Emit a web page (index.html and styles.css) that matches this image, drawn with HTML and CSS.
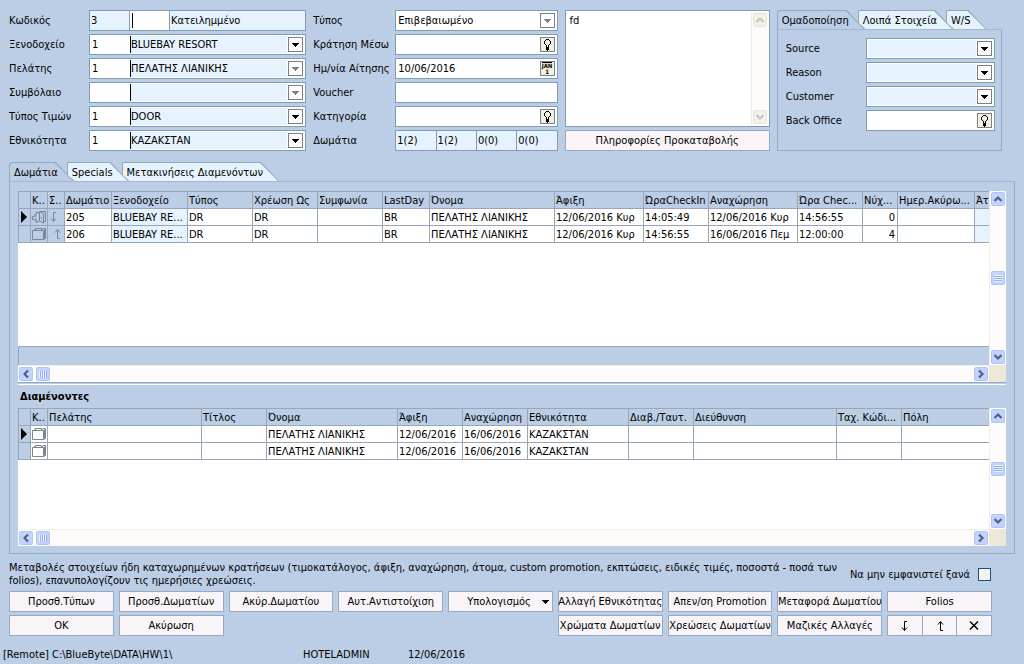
FILE: index.html
```html
<!DOCTYPE html>
<html lang="el">
<head>
    <meta charset="UTF-8">
    <meta name="viewport" content="width=device-width, initial-scale=1.0">
    <title>Κράτηση</title>
    <link rel="stylesheet" href="styles.css">
</head>
<body>
    <!-- Shared icons -->
    <svg class="sprite" aria-hidden="true">
        <symbol id="arrow" viewBox="0 0 13 13"><path d="M3 5h7v1h-1v1h-1v1h-1v1h-1v-1h-1v-1h-1v-1h-1z" fill="currentColor"/></symbol>
        <symbol id="bulb" viewBox="0 0 13 13"><path d="M5 1h3v1H5zM4 2h1v1H4zM8 2h1v1H8zM3 3h1v3H3zM9 3h1v3H9zM4 6h1v1H4zM8 6h1v1H8zM5 7h1v2H5zM7 7h1v2H7zM5 9h3v3H5zM6 12h1v1H6z" fill="#000"/></symbol>
        <symbol id="chev-up" viewBox="0 0 14 14"><path d="M3.500 9L7 5.500L10.500 9" fill="none" stroke="currentColor" stroke-width="2.200"/></symbol>
        <symbol id="chev-down" viewBox="0 0 14 14"><path d="M3.500 5L7 8.500L10.500 5" fill="none" stroke="currentColor" stroke-width="2.200"/></symbol>
        <symbol id="chev-left" viewBox="0 0 14 14"><path d="M9 3.500L5.500 7L9 10.500" fill="none" stroke="currentColor" stroke-width="2.200"/></symbol>
        <symbol id="chev-right" viewBox="0 0 14 14"><path d="M5 3.500L8.500 7L5 10.500" fill="none" stroke="currentColor" stroke-width="2.200"/></symbol>
        <symbol id="row-mark" viewBox="0 0 8 12"><path d="M1 0L7 6L1 12z" fill="#000"/></symbol>
        <symbol id="bag" viewBox="0 0 15 14"><path d="M.5 3.500h11v9H.5zM3.500 3.500v-2h6v2M11.500 12.500l2-1V1.500H11l-1.500 2M1.500 3.500l1-1h1M12.500 2.500v9" fill="none" stroke="currentColor"/></symbol>
        <symbol id="door" viewBox="0 0 15 14"><path d="M7.500 1.500h6v10h-2M7.500 1.500l4 2v9.500l-4-2zM7.500 3.500l-3-1.500v2l-2 .5v2H.5v3h2v1l2 .5v1.500l3-1.500M3 6.500l2-1M3 8.500l2 1M9.500 7v1.500" fill="none" stroke="currentColor"/></symbol>
        <symbol id="to-down" viewBox="0 0 10 12"><path d="M7 1.500H4.500V10M2 7.500L4.500 10.500L7 7.500" fill="none" stroke="currentColor"/></symbol>
        <symbol id="to-up" viewBox="0 0 10 12"><path d="M8 10.500H5.500V2M3 4.500L5.500 1.500L8 4.500" fill="none" stroke="currentColor"/></symbol>
        <symbol id="cross" viewBox="0 0 10 12"><path d="M1 1.500L9 9.500M9 1.500L1 9.500" fill="none" stroke="currentColor" stroke-width="1.500"/></symbol>
    </svg>

    <main>
        <section class="form">
            <div class="fields fields-main">
                <label for="code">Κωδικός</label>
                <div class="box split">
                    <input class="num pale" id="code" value="3">
                    <span class="caret-cell"><input class="caret" aria-label="Κατάσταση"></span>
                    <input class="pale" aria-label="Περιγραφή" value="Κατειλημμένο">
                </div>
                <label for="hotel">Ξενοδοχείο</label>
                <div class="box combo">
                    <input class="num" id="hotel" value="1">
                    <select class="caret" aria-label="Ξενοδοχείο"><option>BLUEBAY RESORT</option></select>
                    <svg class="drop"><use href="#arrow"/></svg>
                </div>
                <label for="customer">Πελάτης</label>
                <div class="box combo">
                    <input class="num" id="customer" value="1">
                    <select class="caret" aria-label="Πελάτης"><option>ΠΕΛΑΤΗΣ ΛΙΑΝΙΚΗΣ</option></select>
                    <svg class="drop off"><use href="#arrow"/></svg>
                </div>
                <label for="contract">Συμβόλαιο</label>
                <div class="box combo">
                    <input class="num" id="contract">
                    <select class="caret" aria-label="Συμβόλαιο"><option></option></select>
                    <svg class="drop off"><use href="#arrow"/></svg>
                </div>
                <label for="rate">Τύπος Τιμών</label>
                <div class="box combo">
                    <input class="num" id="rate" value="1">
                    <select class="caret" aria-label="Τύπος Τιμών"><option>DOOR</option></select>
                    <svg class="drop"><use href="#arrow"/></svg>
                </div>
                <label for="nation">Εθνικότητα</label>
                <div class="box combo">
                    <input class="num" id="nation" value="1">
                    <select class="caret" aria-label="Εθνικότητα"><option>ΚΑΖΑΚΣΤΑΝ</option></select>
                    <svg class="drop"><use href="#arrow"/></svg>
                </div>
            </div>

            <div class="fields fields-type">
                <label for="type">Τύπος</label>
                <div class="box">
                    <select id="type"><option>Επιβεβαιωμένο</option></select>
                    <svg class="drop off"><use href="#arrow"/></svg>
                </div>
                <label for="via">Κράτηση Μέσω</label>
                <div class="box">
                    <input id="via">
                    <button class="pick" aria-label="Αναζήτηση"><svg><use href="#bulb"/></svg></button>
                </div>
                <label for="asked">Ημ/νία Αίτησης</label>
                <div class="box">
                    <input id="asked" value="10/06/2016">
                    <button class="pick cal"><span>JAN</span><span>1</span></button>
                </div>
                <label for="voucher">Voucher</label>
                <div class="box"><input id="voucher"></div>
                <label for="category">Κατηγορία</label>
                <div class="box">
                    <input id="category">
                    <button class="pick" aria-label="Αναζήτηση"><svg><use href="#bulb"/></svg></button>
                </div>
                <label for="rooms">Δωμάτια</label>
                <div class="box split rooms">
                    <input class="pale" id="rooms" value="1(2)">
                    <input class="pale" aria-label="Δωμάτια 2" value="1(2)">
                    <input class="pale" aria-label="Δωμάτια 3" value="0(0)">
                    <input class="pale" aria-label="Δωμάτια 4" value="0(0)">
                </div>
            </div>

            <div class="notes">
                <div class="box memo">
                    <textarea aria-label="Σημειώσεις">fd</textarea>
                    <div class="vscroll off">
                        <button aria-label="Πάνω"><svg><use href="#chev-up"/></svg></button>
                        <button aria-label="Κάτω"><svg><use href="#chev-down"/></svg></button>
                    </div>
                </div>
                <button class="btn">Πληροφορίες Προκαταβολής</button>
            </div>

            <div class="group">
                <div class="tabs">
                    <button class="tab active"><span>Ομαδοποίηση</span></button>
                    <button class="tab"><span>Λοιπά Στοιχεία</span></button>
                    <button class="tab"><span>W/S</span></button>
                </div>
                <div class="panel fields fields-group">
                    <label for="source">Source</label>
                    <div class="box combo">
                        <select id="source"><option></option></select>
                        <svg class="drop"><use href="#arrow"/></svg>
                    </div>
                    <label for="reason">Reason</label>
                    <div class="box combo">
                        <select id="reason"><option></option></select>
                        <svg class="drop"><use href="#arrow"/></svg>
                    </div>
                    <label for="cust">Customer</label>
                    <div class="box combo">
                        <select id="cust"><option></option></select>
                        <svg class="drop"><use href="#arrow"/></svg>
                    </div>
                    <label for="office">Back Office</label>
                    <div class="box">
                        <input id="office">
                        <button class="pick" aria-label="Αναζήτηση"><svg><use href="#bulb"/></svg></button>
                    </div>
                </div>
            </div>
        </section>

        <section class="details">
            <div class="tabs">
                <button class="tab active"><span>Δωμάτια</span></button>
                <button class="tab"><span>Specials</span></button>
                <button class="tab"><span>Μετακινήσεις Διαμενόντων</span></button>
            </div>
            <div class="panel">
                <!-- Rooms -->
                <div class="grid grid-rooms">
                    <div class="sheet">
                        <table>
                            <colgroup>
                                <col class="w12"><col class="w17"><col class="w17"><col class="w47"><col class="w76"><col class="w65"><col class="w65"><col class="w65"><col class="w47"><col class="w125"><col class="w89"><col class="w65"><col class="w89"><col class="w65"><col class="w35"><col class="w77"><col>
                            </colgroup>
                            <tr>
                                <th></th><th>Κ..</th><th>Σ..</th><th>Δωμάτιο</th><th>Ξενοδοχείο</th><th>Τύπος</th><th>Χρέωση Ως</th><th>Συμφωνία</th><th>LastDay</th><th>Όνομα</th><th>Άφιξη</th><th>ΏραCheckIn</th><th>Αναχώρηση</th><th>Ώρα Chec...</th><th>Νύχ...</th><th>Ημερ.Ακύρω...</th><th>Άτ</th>
                            </tr>
                            <tr>
                                <td class="head"><svg class="mark"><use href="#row-mark"/></svg></td>
                                <td class="head"><svg class="ico"><use href="#door"/></svg></td>
                                <td class="head"><svg class="dir"><use href="#to-down"/></svg></td>
                                <td>205</td><td class="pale">BLUEBAY RE...</td><td>DR</td><td>DR</td><td></td><td>BR</td><td>ΠΕΛΑΤΗΣ ΛΙΑΝΙΚΗΣ</td><td>12/06/2016 Κυρ</td><td>14:05:49</td><td>12/06/2016 Κυρ</td><td>14:56:55</td><td class="right">0</td><td></td><td class="pale"></td>
                            </tr>
                            <tr>
                                <td class="head"></td>
                                <td class="head"><svg class="ico"><use href="#bag"/></svg></td>
                                <td class="head right"><svg class="dir"><use href="#to-up"/></svg></td>
                                <td>206</td><td class="pale">BLUEBAY RE...</td><td>DR</td><td>DR</td><td></td><td>BR</td><td>ΠΕΛΑΤΗΣ ΛΙΑΝΙΚΗΣ</td><td>12/06/2016 Κυρ</td><td>14:56:55</td><td>16/06/2016 Πεμ</td><td>12:00:00</td><td class="right">4</td><td></td><td class="pale"></td>
                            </tr>
                        </table>
                        <div class="totals"></div>
                    </div>
                    <div class="vscroll">
                        <button aria-label="Πάνω"><svg><use href="#chev-up"/></svg></button>
                        <span class="thumb"></span>
                        <button aria-label="Κάτω"><svg><use href="#chev-down"/></svg></button>
                    </div>
                    <div class="hscroll">
                        <button aria-label="Αριστερά"><svg><use href="#chev-left"/></svg></button>
                        <span class="thumb"></span>
                        <button aria-label="Δεξιά"><svg><use href="#chev-right"/></svg></button>
                    </div>
                    <div class="corner"></div>
                </div>

                <h2>Διαμένοντες</h2>

                <!-- Guests -->
                <div class="grid grid-guests">
                    <div class="sheet">
                        <table>
                            <colgroup>
                                <col class="w12"><col class="w17"><col class="w154"><col class="w65"><col class="w131"><col class="w65"><col class="w65"><col class="w101"><col class="w65"><col class="w143"><col class="w65"><col>
                            </colgroup>
                            <tr>
                                <th></th><th>Κ..</th><th>Πελάτης</th><th>Τίτλος</th><th>Όνομα</th><th>Άφιξη</th><th>Αναχώρηση</th><th>Εθνικότητα</th><th>Διαβ./Ταυτ.</th><th>Διεύθυνση</th><th>Ταχ. Κώδι...</th><th>Πόλη</th>
                            </tr>
                            <tr>
                                <td class="head"><svg class="mark"><use href="#row-mark"/></svg></td>
                                <td><svg class="ico"><use href="#bag"/></svg></td>
                                <td></td><td></td><td>ΠΕΛΑΤΗΣ ΛΙΑΝΙΚΗΣ</td><td>12/06/2016</td><td>16/06/2016</td><td>ΚΑΖΑΚΣΤΑΝ</td><td></td><td></td><td></td><td></td>
                            </tr>
                            <tr>
                                <td class="head"></td>
                                <td><svg class="ico"><use href="#bag"/></svg></td>
                                <td></td><td></td><td>ΠΕΛΑΤΗΣ ΛΙΑΝΙΚΗΣ</td><td>12/06/2016</td><td>16/06/2016</td><td>ΚΑΖΑΚΣΤΑΝ</td><td></td><td></td><td></td><td></td>
                            </tr>
                        </table>
                    </div>
                    <div class="vscroll">
                        <button aria-label="Πάνω"><svg><use href="#chev-up"/></svg></button>
                        <span class="thumb"></span>
                        <button aria-label="Κάτω"><svg><use href="#chev-down"/></svg></button>
                    </div>
                    <div class="hscroll">
                        <button aria-label="Αριστερά"><svg><use href="#chev-left"/></svg></button>
                        <span class="thumb"></span>
                        <button aria-label="Δεξιά"><svg><use href="#chev-right"/></svg></button>
                    </div>
                    <div class="corner"></div>
                </div>
            </div>
        </section>

        <section class="notice">
            <p>Μεταβολές στοιχείων ήδη καταχωρημένων κρατήσεων (τιμοκατάλογος, άφιξη, αναχώρηση, άτομα, custom promotion, εκπτώσεις, ειδικές τιμές, ποσοστά - ποσά των<br>folios), επανυπολογίζουν τις ημερήσιες χρεώσεις.</p>
            <label>Να μην εμφανιστεί ξανά <input type="checkbox"></label>
        </section>

        <section class="actions">
            <button class="btn">Προσθ.Τύπων</button>
            <button class="btn">Προσθ.Δωματίων</button>
            <button class="btn">Ακύρ.Δωματίου</button>
            <button class="btn">Αυτ.Αντιστοίχιση</button>
            <button class="btn menu">Υπολογισμός<svg><use href="#arrow"/></svg></button>
            <button class="btn">Αλλαγή Εθνικότητας</button>
            <button class="btn">Απεν/ση Promotion</button>
            <button class="btn">Μεταφορά Δωματίου</button>
            <button class="btn">Folios</button>
            <button class="btn">OK</button>
            <button class="btn">Ακύρωση</button>
            <button class="btn colors">Χρώματα Δωματίων</button>
            <button class="btn">Χρεώσεις Δωματίων</button>
            <button class="btn">Μαζικές Αλλαγές</button>
            <div class="btn-group">
                <button class="btn" aria-label="Κάτω"><svg class="dir"><use href="#to-down"/></svg></button>
                <button class="btn" aria-label="Πάνω"><svg class="dir"><use href="#to-up"/></svg></button>
                <button class="btn" aria-label="Διαγραφή"><svg class="dir"><use href="#cross"/></svg></button>
            </div>
        </section>
    </main>

    <footer>
        <span class="path">[Remote] C:\BlueByte\DATA\HW\1\</span>
        <span class="user">HOTELADMIN</span>
        <span>12/06/2016</span>
    </footer>
</body>
</html>
```

FILE: styles.css
```css
/* Basic Reset and Font */
* {
    margin: 0;
    padding: 0;
    box-sizing: border-box;
}

body,
button,
input,
select,
textarea {
    font-family: Tahoma, "DejaVu Sans Condensed", sans-serif;
    font-size: 11px;
    line-height: 13px;
    color: #000;
}

body {
    background-color: #bccee6;
    min-height: 100vh;
    display: flex;
    flex-direction: column;
}

main {
    padding: 10px 9px 0;
}

.sprite {
    position: absolute;
    width: 0;
    height: 0;
}

svg {
    display: block;
    flex: none;
}

/* Top form */
.form {
    display: grid;
    grid-template-columns: 297fr 244fr 205fr 225fr;
    gap: 7px;
    margin-right: 13px;
}

.fields {
    display: grid;
    grid-auto-rows: 21px;
    gap: 3px 0;
    align-items: center;
}

.fields-main {
    grid-template-columns: 80px 1fr;
}

.fields-type {
    grid-template-columns: 82px 1fr;
}

.fields label {
    white-space: nowrap;
}

.box {
    display: flex;
    height: 21px;
    border: 1px solid #7f9db9;
    background-color: #fff;
    padding: 1px;
    min-width: 0;
}

.box input,
.box select,
.box textarea {
    flex: 1;
    min-width: 0;
    border: none;
    outline: none;
    background-color: transparent;
    appearance: none;
    border-radius: 0;
    padding: 0 1px;
    resize: none;
}

.box .num {
    flex: none;
    width: 39px;
}

.box.combo select {
    background-color: #e6f2fd;
}

.box select.caret {
    border-left: 1px solid #000;
    padding: 0;
}

.pale,
.box .pale {
    background-color: #e6f2fd;
}

.box.split {
    padding: 0;
}

.box.split input {
    padding: 0 1px;
}

.caret-cell {
    display: flex;
    width: 41px;
    padding: 2px;
    border: solid #7f9db9;
    border-width: 0 1px;
}

.box.split .caret {
    border-left: 1px solid #000;
}

.box.rooms input + input {
    border-left: 1px solid #7f9db9;
}

.drop {
    width: 15px;
    height: 15px;
    border: 1px solid #808080;
    margin: 1px;
}

.drop.off {
    color: #808080;
}

.pick {
    width: 15px;
    height: 15px;
    margin: 1px;
    border: 1px solid #808080;
    background-color: #f1efe2;
}

.pick svg {
    width: 13px;
    height: 13px;
}

.cal {
    display: flex;
    flex-direction: column;
    align-items: center;
    font-size: 6px;
    font-weight: bold;
    line-height: 6px;
}

.cal span:first-child {
    border-top: 1px solid #000;
}

.notes {
    display: flex;
    flex-direction: column;
    gap: 3px;
}

.memo {
    flex: 1;
}

.box.memo textarea {
    padding: 2px 3px;
}

.btn {
    display: flex;
    align-items: center;
    justify-content: center;
    height: 21px;
    min-width: 0;
    border: 1px solid #93a9c6;
    background-color: #f8f4f8;
    white-space: nowrap;
}

/* Tabs */
.tabs {
    display: flex;
    height: 19px;
}

.tab {
    position: relative;
    border: none;
    background-color: #93a9c0;
    padding: 2px 16px 0 5px;
    white-space: nowrap;
    clip-path: polygon(0 0, calc(100% - 18px) 0, 100% 100%, 7px 100%, 0 12px);
}

.tab + .tab {
    margin-left: -7px;
}

.tab::before {
    content: "";
    position: absolute;
    inset: 1px 1px 0;
    background-color: #e6f3fd;
    clip-path: polygon(0 0, calc(100% - 18px) 0, 100% 100%, 7px 100%, 0 12px);
}

.tab.active,
.tab.active::before {
    clip-path: polygon(0 2px, 2px 0, calc(100% - 18px) 0, 100% 100%, 0 100%);
}

.tab.active::before {
    background-color: #bccee6;
}

.tab span {
    position: relative;
}

.panel {
    border: 1px solid #93a9c0;
    border-top-color: #a3b7ce;
}

.group {
    display: flex;
    flex-direction: column;
}

.fields-group {
    flex: 1;
    grid-template-columns: 80px 1fr;
    align-content: start;
    padding: 8px 6px 0 8px;
}

/* Grids */
.details {
    margin-top: 11px;
}

.details .panel {
    padding: 9px 8px 7px;
}

.grid {
    display: grid;
    grid-template-columns: 1fr 17px;
    grid-template-rows: 1fr 17px;
}

.grid-rooms {
    height: 192px;
    border-bottom: 1px solid #93a9c0;
}

.grid-guests {
    height: 138px;
}

.sheet {
    display: flex;
    flex-direction: column;
    justify-content: space-between;
    background-color: #fff;
    min-width: 0;
    overflow: hidden;
}

.totals {
    height: 19px;
    border: 1px solid #93a9c0;
    border-width: 1px 0 0 1px;
    background-color: #bccee6;
}

table {
    table-layout: fixed;
    width: 100%;
    border-collapse: separate;
    border-spacing: 0;
    border-left: 1px solid #98a6b8;
    border-top: 1px solid #98a6b8;
}

th,
td {
    height: 17px;
    border: solid #98a6b8;
    border-width: 0 1px 1px 0;
    padding: 0 1px;
    text-align: left;
    font-weight: normal;
    white-space: nowrap;
    overflow: hidden;
}

th,
.head {
    background-color: #bccee6;
}

th:last-child,
td:last-child {
    border-right: none;
}

td.right {
    text-align: right;
    padding-right: 2px;
}

.w12 { width: 12px; }
.w17 { width: 17px; }
.w35 { width: 35px; }
.w47 { width: 47px; }
.w65 { width: 65px; }
.w76 { width: 76px; }
.w77 { width: 77px; }
.w89 { width: 89px; }
.w101 { width: 101px; }
.w125 { width: 125px; }
.w131 { width: 131px; }
.w143 { width: 143px; }
.w154 { width: 154px; }

.mark {
    width: 8px;
    height: 12px;
}

.ico {
    width: 15px;
    height: 14px;
    color: #7c8590;
}

.dir {
    width: 10px;
    height: 12px;
}

td .dir {
    color: #7c8590;
}

td.right .dir {
    margin-left: auto;
}

/* Scroll bars */
.vscroll,
.hscroll {
    display: flex;
    justify-content: space-between;
    align-items: center;
    background-color: #fdfcfa;
}

.vscroll {
    flex-direction: column;
    width: 17px;
    border-left: 1px solid #f0eee4;
}

.hscroll {
    border-top: 1px solid #f0eee4;
}

.hscroll .thumb {
    margin-left: 1px;
    margin-right: auto;
}

.vscroll button,
.hscroll button,
.thumb {
    width: 16px;
    height: 16px;
    border: 1px solid #fff;
    border-radius: 3px;
    background-color: #c3d3fd;
    box-shadow: inset 0 0 0 1px #b0c4f4;
    color: #4d6185;
}

.vscroll svg,
.hscroll svg {
    width: 14px;
    height: 14px;
}

.thumb {
    display: block;
    background-image: repeating-linear-gradient(90deg, #eef4fe 0 1px, #8cb0f8 1px 2px);
    background-size: 8px 7px;
    background-position: center;
    background-repeat: no-repeat;
}

.vscroll .thumb {
    background-image: repeating-linear-gradient(#eef4fe 0 1px, #8cb0f8 1px 2px);
}

.vscroll.off button {
    background-color: #f2f1ea;
    box-shadow: inset 0 0 0 1px #e6e4da;
    color: #c9c7ba;
}

.corner {
    background-color: #ece9d8;
}

h2 {
    font-size: 11px;
    line-height: 13px;
    margin-top: 1px;
    padding: 5px 2px 5px;
    border-top: 1px solid #fff;
}

/* Notice */
.notice {
    display: flex;
    justify-content: space-between;
    margin: 7px 24px 0 0;
}

.notice label {
    display: flex;
    align-items: center;
    gap: 8px;
    white-space: nowrap;
}

.notice input {
    appearance: none;
    width: 13px;
    height: 13px;
    border: 1px solid #1c5180;
    background-color: #f4f3ee;
}

/* Buttons */
.actions {
    display: grid;
    grid-template-columns: repeat(9, minmax(0, 1fr));
    gap: 3px 5px;
    margin: 4px 23px 0 0;
}

.menu {
    justify-content: flex-end;
    gap: 8px;
}

.menu svg {
    width: 13px;
    height: 13px;
}

.colors {
    grid-column: 6;
}

.btn-group {
    display: flex;
}

.btn-group .btn {
    flex: 1;
}

.btn-group .btn + .btn {
    border-left: none;
}

/* Footer */
footer {
    display: flex;
    margin-top: auto;
    padding: 0 3px 3px;
}

.path {
    width: 300px;
}

.user {
    width: 105px;
}
```
